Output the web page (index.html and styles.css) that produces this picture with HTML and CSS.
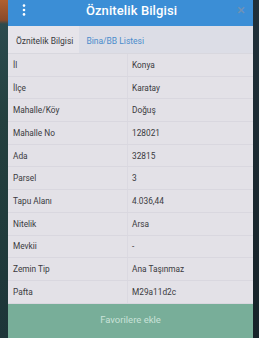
FILE: index.html
```html
<!DOCTYPE html>
<html lang="tr">
<head>
<meta charset="utf-8">
<link rel="stylesheet" href="styles.css">
</head>
<body>
<div class="screen">
  <div class="edge-left"></div>
  <div class="dialog">
    <header class="header">
      <svg class="menu" width="4" height="12" viewBox="0 0 4 12">
        <circle cx="2" cy="1.6" r="1.3" fill="#fff"/>
        <circle cx="2" cy="6" r="1.3" fill="#fff"/>
        <circle cx="2" cy="10.4" r="1.3" fill="#fff"/>
      </svg>
      <h1 class="title">Öznitelik Bilgisi</h1>
      <span class="close">×</span>
    </header>
    <nav class="tabs">
      <div class="tab active">Öznitelik Bilgisi</div>
      <div class="tab">Bina/BB Listesi</div>
    </nav>
    <div class="table">
      <div class="row"><div class="k">İl</div><div class="v">Konya</div></div>
      <div class="row"><div class="k">İlçe</div><div class="v">Karatay</div></div>
      <div class="row"><div class="k">Mahalle/Köy</div><div class="v">Doğuş</div></div>
      <div class="row"><div class="k">Mahalle No</div><div class="v">128021</div></div>
      <div class="row"><div class="k">Ada</div><div class="v">32815</div></div>
      <div class="row"><div class="k">Parsel</div><div class="v">3</div></div>
      <div class="row"><div class="k">Tapu Alanı</div><div class="v">4.036,44</div></div>
      <div class="row"><div class="k">Nitelik</div><div class="v">Arsa</div></div>
      <div class="row"><div class="k">Mevkii</div><div class="v">-</div></div>
      <div class="row"><div class="k">Zemin Tip</div><div class="v">Ana Taşınmaz</div></div>
      <div class="row"><div class="k">Pafta</div><div class="v">M29a11d2c</div></div>
    </div>
    <button class="fav">Favorilere ekle</button>
  </div>
  <div class="edge-right"></div>
</div>
</body>
</html>
```
FILE: styles.css
```css
* { box-sizing: border-box; }
html, body { margin: 0; padding: 0; }
body {
  width: 259px;
  height: 338px;
  overflow: hidden;
  background: #1b2c31;
  font-family: Roboto, "Noto Sans", sans-serif;
}
.screen {
  display: flex;
  height: 338px;
}
.edge-left {
  width: 8px;
  flex: none;
  background: linear-gradient(to bottom, #b0602f 0, #8a4a2a 20px, #2b4a4e 24px, #24403f 120px, #1d3538 338px);
}
.edge-right {
  width: 6px;
  flex: none;
  background: linear-gradient(to bottom, #20303a, #172329);
}
.dialog {
  width: 245px;
  flex: none;
  display: flex;
  flex-direction: column;
  background: #e3e1e7;
}
.header {
  height: 26px;
  flex: none;
  background: #3b8ed6;
  display: flex;
  align-items: center;
  padding: 0 8px 6px 14px;
}
.menu { flex: none; }
.title {
  flex: 1;
  margin: 0;
  text-align: center;
  color: #fff;
  font-size: 13px;
  font-weight: 500;
  letter-spacing: 0.1px;
}
.close {
  color: #6e92b6;
  font-size: 15px;
  line-height: 1;
  font-weight: 500;
}
.tabs {
  height: 28px;
  flex: none;
  display: flex;
  background: #dcdde6;
  border-bottom: 1px solid #d8d7de;
}
.tab {
  display: flex;
  align-items: center;
  white-space: nowrap;
  padding: 3px 7px 0 7px;
  font-size: 8.5px;
  color: #4a8ccc;
}
.tab.active {
  padding: 3px 6px 0 8px;
  background: #e6e4ea;
  color: #3a3a3e;
}
.table {
  display: flex;
  flex-direction: column;
}
.row {
  height: 22.7px;
  display: flex;
  align-items: center;
  border-bottom: 1px solid #d9d7df;
  font-size: 8.3px;
  color: #3a3a3e;
}
.k {
  width: 120px;
  height: 100%;
  display: flex;
  align-items: center;
  padding-left: 5px;
  border-right: 1px solid #dbd9e1;
}
.v {
  padding-left: 4px;
}
.fav {
  flex: 1;
  border: none;
  margin: 0;
  background: #78ae99;
  color: #c9e2d8;
  font-family: Roboto, "Noto Sans", sans-serif;
  font-size: 9.5px;
  padding: 0 0 2px 0;
}
```
